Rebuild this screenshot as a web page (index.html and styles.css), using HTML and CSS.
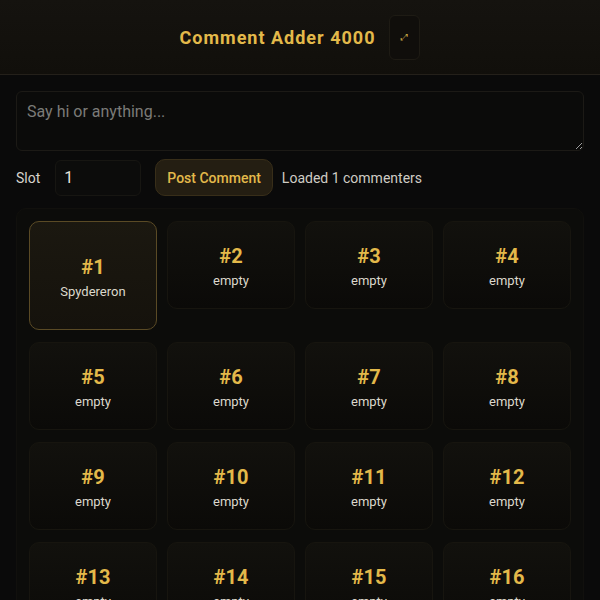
FILE: index.html
```html
<!DOCTYPE html>
<html>
<head>
<meta charset="utf-8">
<link rel="stylesheet" href="styles.css">
</head>
<body>
<header class="topbar">
  <h1 class="title">Comment Adder 4000</h1>
  <button class="expand-btn" type="button">⤢</button>
</header>
<main class="content">
  <textarea class="comment-box" placeholder="Say hi or anything..."></textarea>
  <div class="controls">
    <label class="slot-label">Slot</label>
    <input class="slot-input" type="text" value="1">
    <button class="post-btn" type="button">Post Comment</button>
    <span class="status">Loaded 1 commenters</span>
  </div>
  <section class="grid-panel">
    <div class="grid">
      <div class="card active"><div class="num">#1</div><div class="name">Spydereron</div></div>
      <div class="card"><div class="num">#2</div><div class="name">empty</div></div>
      <div class="card"><div class="num">#3</div><div class="name">empty</div></div>
      <div class="card"><div class="num">#4</div><div class="name">empty</div></div>
      <div class="card"><div class="num">#5</div><div class="name">empty</div></div>
      <div class="card"><div class="num">#6</div><div class="name">empty</div></div>
      <div class="card"><div class="num">#7</div><div class="name">empty</div></div>
      <div class="card"><div class="num">#8</div><div class="name">empty</div></div>
      <div class="card"><div class="num">#9</div><div class="name">empty</div></div>
      <div class="card"><div class="num">#10</div><div class="name">empty</div></div>
      <div class="card"><div class="num">#11</div><div class="name">empty</div></div>
      <div class="card"><div class="num">#12</div><div class="name">empty</div></div>
      <div class="card"><div class="num">#13</div><div class="name">empty</div></div>
      <div class="card"><div class="num">#14</div><div class="name">empty</div></div>
      <div class="card"><div class="num">#15</div><div class="name">empty</div></div>
      <div class="card"><div class="num">#16</div><div class="name">empty</div></div>
    </div>
  </section>
</main>
</body>
</html>
```
FILE: styles.css
```css
* { box-sizing: border-box; }
html, body { margin: 0; padding: 0; }
body {
  background: #0a0a0a;
  font-family: Roboto, "Liberation Sans", sans-serif;
  color: #d8d4c8;
  overflow: hidden;
}
.topbar {
  height: 75px;
  display: flex;
  align-items: center;
  justify-content: center;
  gap: 14px;
  background: linear-gradient(180deg, #15130f 0%, #110f0b 100%);
  border-bottom: 1px solid #24201a;
}
.title {
  margin: 0;
  font-size: 18px;
  font-weight: 700;
  letter-spacing: 1px;
  color: #e3b94a;
}
.expand-btn {
  width: 31px;
  height: 45px;
  background: #100e0b;
  border: 1px solid #1e1b14;
  border-radius: 6px;
  color: #c9a646;
  font-size: 9px;
  padding: 0;
  font-family: "DejaVu Sans", sans-serif;
}
.content {
  padding: 16px 16px 0;
}
.comment-box {
  display: block;
  width: 100%;
  height: 60px;
  background: #0b0b0a;
  border: 1px solid #1c1a16;
  border-radius: 6px;
  padding: 10px;
  font-family: Roboto, "Liberation Sans", sans-serif;
  font-size: 16px;
  color: #ddd;
  resize: vertical;
}
.comment-box::placeholder { color: #7b7b78; }
.controls {
  display: flex;
  align-items: center;
  margin-top: 8px;
  height: 37px;
  font-size: 14px;
}
.slot-label { color: #d6d3cc; margin-right: 15px; }
.slot-input {
  width: 86px;
  height: 36px;
  background: #0c0c0b;
  border: 1px solid #171612;
  border-radius: 6px;
  padding: 0 8px;
  color: #e6e3dc;
  font-family: Roboto, "Liberation Sans", sans-serif;
  font-size: 16px;
  margin-right: 14px;
}
.post-btn {
  height: 37px;
  padding: 0 11px;
  background: #241e12;
  border: 1px solid #382e19;
  border-radius: 10px;
  color: #e3b94a;
  font-family: Roboto, "Liberation Sans", sans-serif;
  font-size: 14px;
  font-weight: 500;
  margin-right: 9px;
}
.status { color: #cfccc4; }
.grid-panel {
  margin-top: 12px;
  background: #0c0c0a;
  border: 1px solid #11100d;
  border-radius: 10px;
  padding: 12px;
}
.grid {
  display: grid;
  grid-template-columns: repeat(4, 1fr);
  column-gap: 10px;
  row-gap: 12px;
  align-items: start;
}
.card {
  height: 88px;
  display: flex;
  flex-direction: column;
  align-items: center;
  justify-content: center;
  gap: 5px;
  padding-top: 2px;
  background: linear-gradient(180deg, #12110d 0%, #0b0a08 100%);
  border: 1px solid #17150f;
  border-radius: 10px;
}
.card.active {
  height: 109px;
  background: linear-gradient(180deg, #1b1810 0%, #15120c 100%);
  border-color: #5a4a25;
}
.num {
  font-size: 20px;
  font-weight: 700;
  color: #e3b94a;
}
.name {
  font-size: 13px;
  color: #dcd8cc;
}
```
